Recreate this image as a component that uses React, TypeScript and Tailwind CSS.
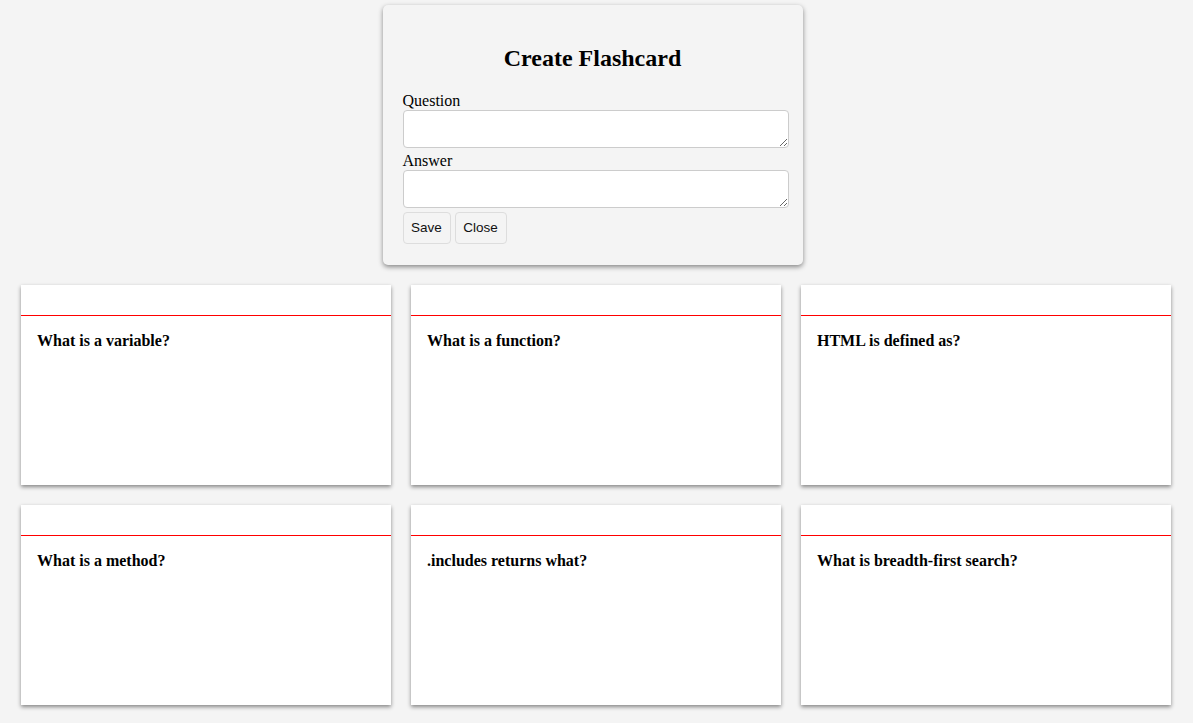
import { useState } from "react";

const cards = [
  "What is a variable?",
  "What is a function?",
  "HTML is defined as?",
  "What is a method?",
  ".includes returns what?",
  "What is breadth-first search?",
];

function Flashcard({ question }: { question: string }) {
  return (
    <div className="h-[200px] bg-white shadow-[0_2px_4px_rgba(0,0,0,0.45)]">
      <div className="h-[31px] border-b border-[#ff0000]" />
      <div className="px-4 pt-[16px] text-base font-bold leading-[18px] text-black">{question}</div>
    </div>
  );
}

export default function App() {
  const [question, setQuestion] = useState("");
  const [answer, setAnswer] = useState("");

  return (
    <div className="min-h-[723px] bg-[#f4f4f4] font-['Liberation_Serif',serif] text-black">
      <div className="flex justify-center pt-[5px] pr-2">
        {/* Form */}
        <div className="w-[420px] rounded-[5px] bg-[#f4f4f4] px-5 pt-[39px] pb-[21px] shadow-[0_2px_5px_rgba(0,0,0,0.45)]">
          <h2 className="mb-[20px] text-center text-2xl leading-[28px] font-bold">Create Flashcard</h2>
          <label className="block text-base leading-[18px]">Question</label>
          <textarea
            value={question}
            onChange={(e) => setQuestion(e.target.value)}
            className="mb-[4px] block h-[38px] w-[386px] rounded-[4px] border border-[#ccc] bg-white"
          />
          <label className="block text-base leading-[18px]">Answer</label>
          <textarea
            value={answer}
            onChange={(e) => setAnswer(e.target.value)}
            className="mb-[4px] block h-[38px] w-[386px] rounded-[4px] border border-[#ccc] bg-white"
          />
          <div className="flex gap-1">
            <button className="h-[32px] w-[48px] rounded-[4px] border border-[#ddd] bg-[#f4f4f4] font-['Liberation_Sans',sans-serif] text-[13.5px] text-[#111]">
              Save
            </button>
            <button className="h-[32px] w-[52px] rounded-[4px] border border-[#ddd] bg-[#f4f4f4] font-['Liberation_Sans',sans-serif] text-[13.5px] text-[#111]">
              Close
            </button>
          </div>
        </div>
      </div>

      {/* Cards */}
      <div className="mt-5 grid grid-cols-[370px_370px_370px] gap-5 pl-[21px]">
        {cards.map((q) => (
          <Flashcard key={q} question={q} />
        ))}
      </div>
    </div>
  );
}
